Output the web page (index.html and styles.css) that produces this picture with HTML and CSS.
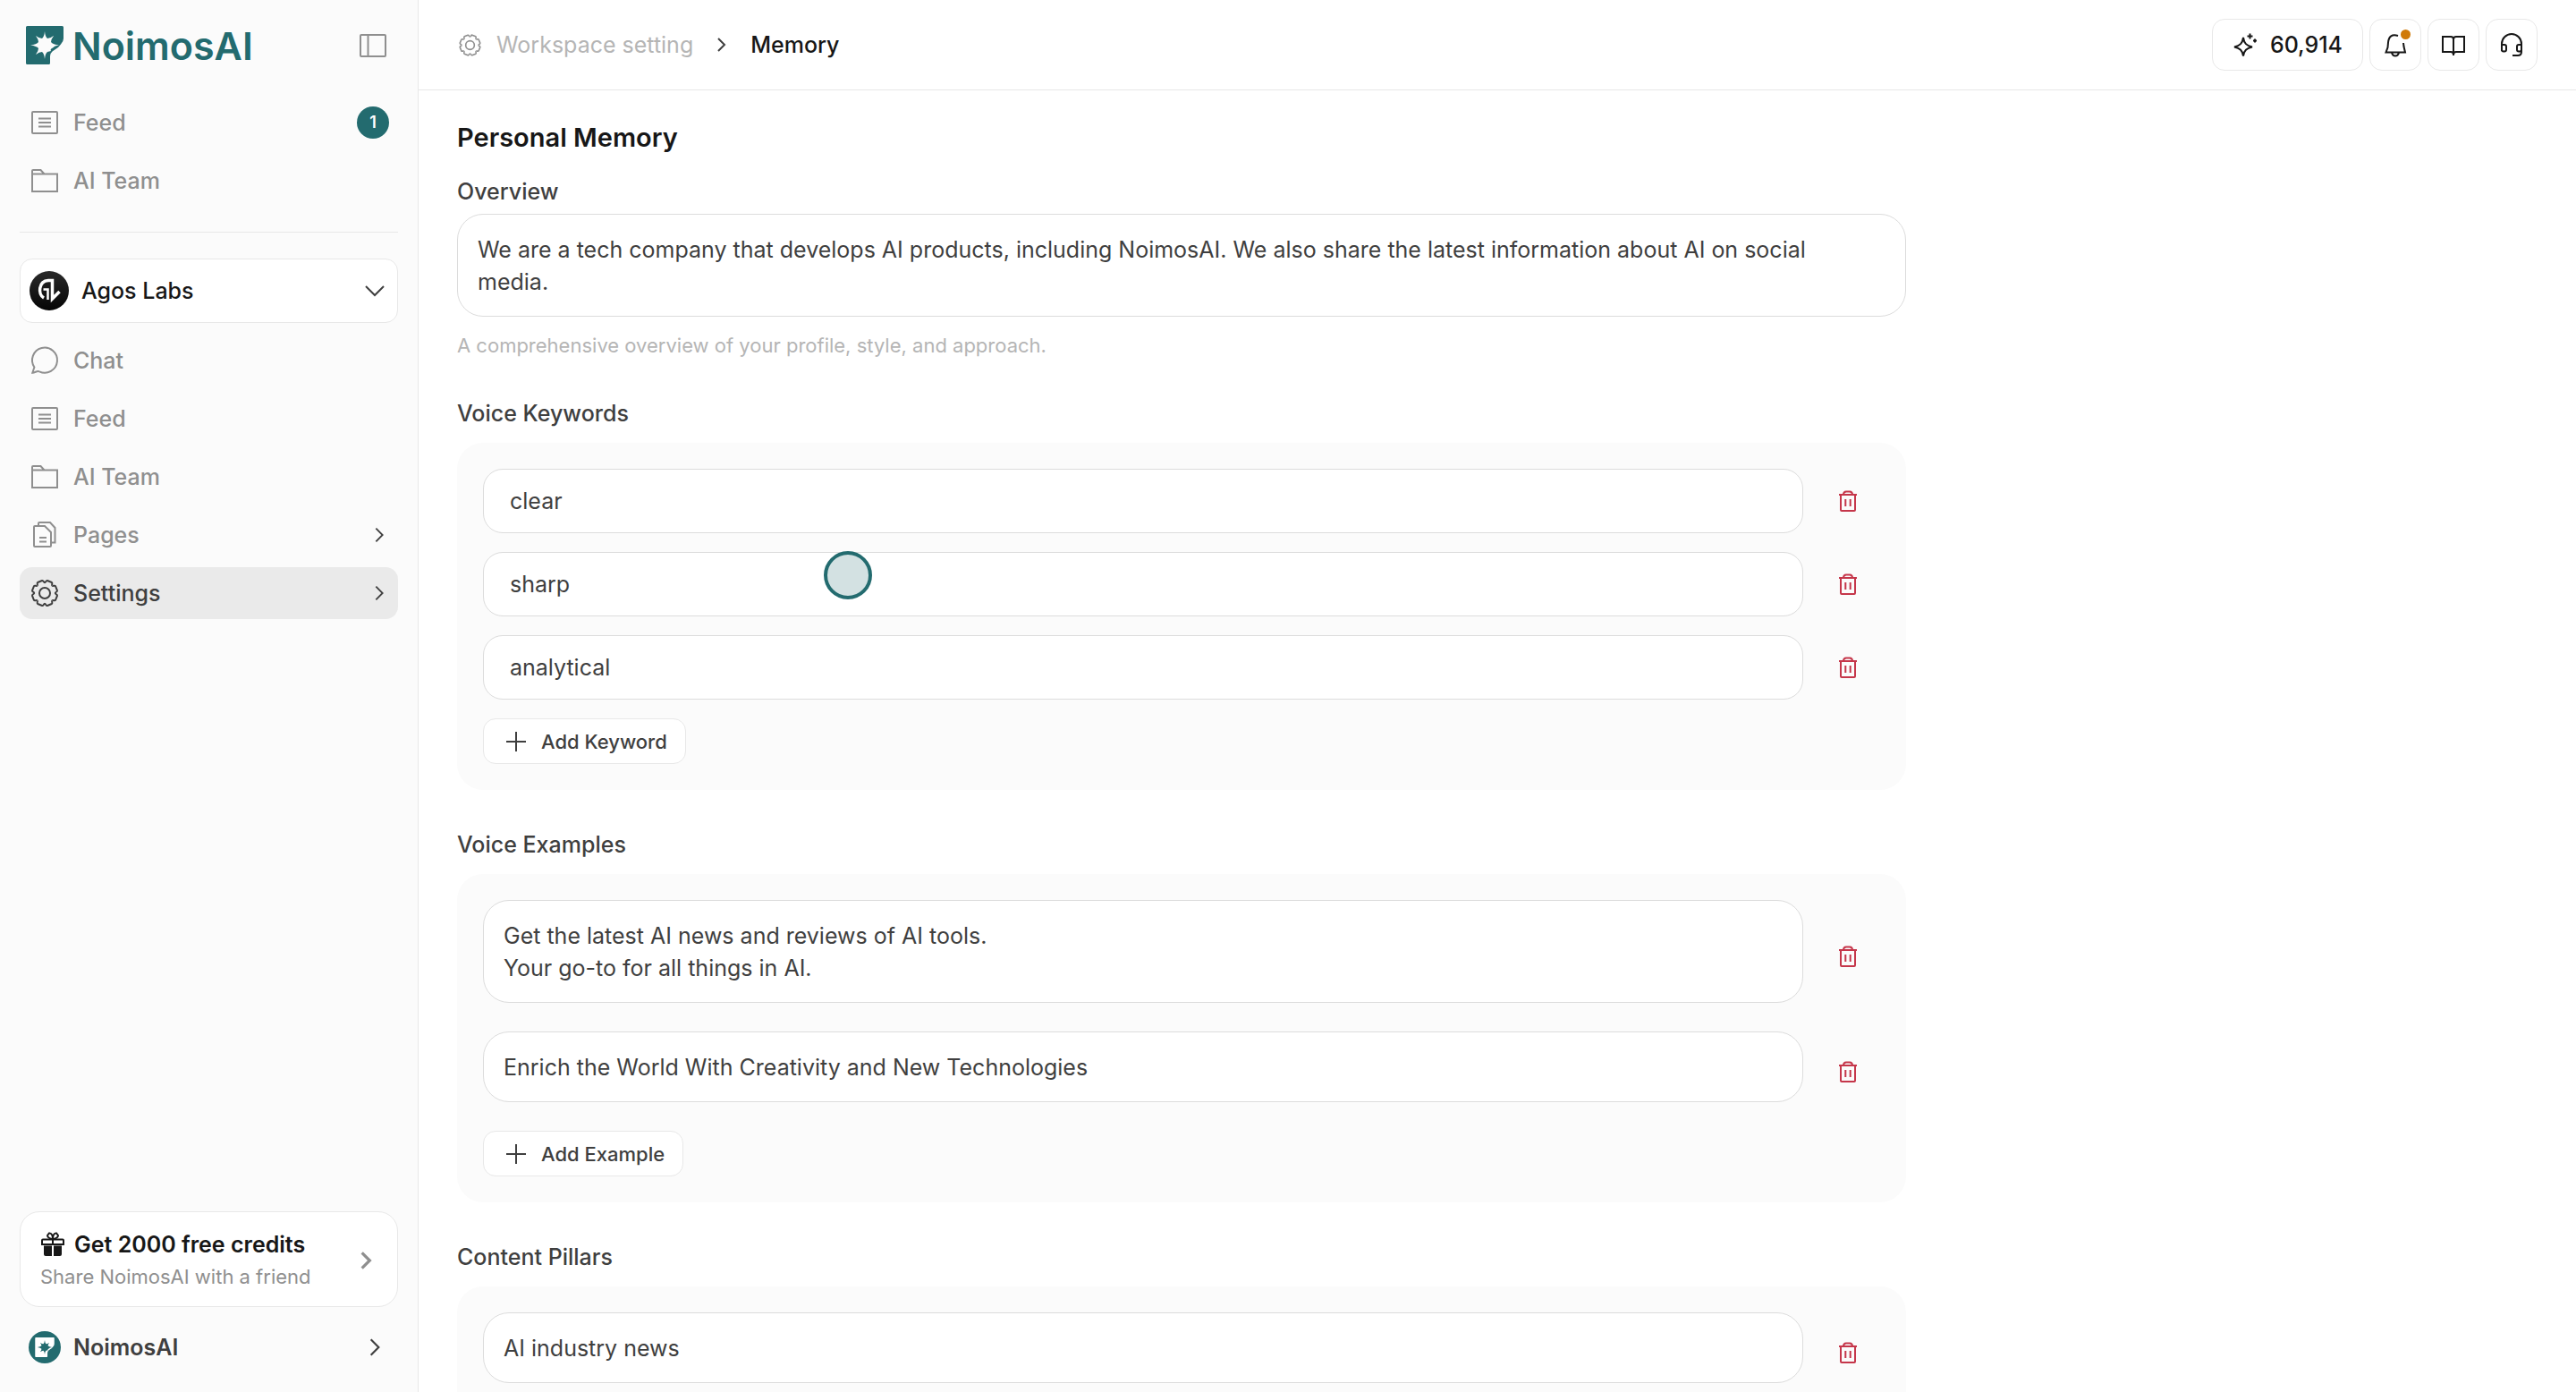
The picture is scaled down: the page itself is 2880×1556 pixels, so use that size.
FILE: index.html
```html
<!DOCTYPE html>
<html lang="en">
<head>
<meta charset="utf-8">
<title>Memory - NoimosAI</title>
<link rel="stylesheet" href="styles.css">
</head>
<body>
<svg class="sprite" aria-hidden="true">
  <symbol id="i-feed" viewBox="0 0 36 36"><rect x="4" y="6" width="28" height="24" rx="1"/><path d="M11 13.500h14M11 18h14M11 22.500h14"/></symbol>
  <symbol id="i-folder" viewBox="0 0 36 36"><path d="M4 10.500V30h28V10.500H4V7q0-1 1-1h8.500l4 4.500"/></symbol>
  <symbol id="i-chat" viewBox="0 0 36 36"><path d="M4.300 31.700 6.400 25.500A14 14 0 1 1 12 30.300C9.500 29 7.500 31.500 4.300 31.700Z"/></symbol>
  <symbol id="i-pages" viewBox="0 0 36 36"><path d="M6 9q0-1 1-1h11l7 7v15q0 1-1 1H7q-1 0-1-1ZM11 8V5q0-1 1-1h12l5.500 6v16.500H25.500M12 21h8M12 25.500h8"/></symbol>
  <symbol id="i-gear" viewBox="0 0 36 36">
    <defs><path id="tooth" d="M18 6.200C19.300 6.200 19.400 3.500 21 4L25.770 6C27.270 6.760 25.420 8.740 26.340 9.660"/></defs>
    <circle cx="18" cy="18" r="6"/>
    <use href="#tooth"/><use href="#tooth" transform="rotate(45 18 18)"/><use href="#tooth" transform="rotate(90 18 18)"/><use href="#tooth" transform="rotate(135 18 18)"/><use href="#tooth" transform="rotate(180 18 18)"/><use href="#tooth" transform="rotate(225 18 18)"/><use href="#tooth" transform="rotate(270 18 18)"/><use href="#tooth" transform="rotate(315 18 18)"/>
  </symbol>
  <symbol id="i-right" viewBox="0 0 24 24"><path d="m8 4 8 8-8 8"/></symbol>
  <symbol id="i-down" viewBox="0 0 24 24"><path d="m2 7 10 10L22 7"/></symbol>
  <symbol id="i-plus" viewBox="0 0 24 24"><path d="M12 1v22M1 12h22"/></symbol>
  <symbol id="i-trash" viewBox="0 0 28 28"><path d="M4 7h20M6 7v17q0 1 1 1h14q1 0 1-1V7M9 7q0-3.500 3-3.500h4q3 0 3 3.500M11.300 12v8M16.700 12v8"/></symbol>
  <symbol id="i-note" viewBox="0 0 42 43"><path fill-rule="evenodd" d="M1.500 0H40.500Q42 0 42 1.500V14Q42 17.500 39 20.500L36 24Q33 26 29.500 28.500Q27 30.500 27 34V41.500Q27 43 25.500 43H1.500Q0 43 0 41.500V1.500Q0 0 1.500 0ZM21 6Q20.500 12 18 14Q15 14 11 11Q14 15 14 18Q12 20.500 5 21.500Q12 22.500 14 25Q14 28 11 32Q15 29 18 29Q20.500 31 21 37Q21.500 31 24 29L28 28Q26.500 26 30 24.500Q32 22 37 21.500Q30 20.500 28 18Q28 15 31 11Q27 14 24 14Q21.500 12 21 6Z"/></symbol>
</svg>

<div class="app">
  <aside class="sidebar">
    <div class="brand">
      <a class="brand-link" href="#">
        <svg class="brand-mark"><use href="#i-note"/></svg>
        <span>NoimosAI</span>
      </a>
      <button class="plain toggle" aria-label="Toggle sidebar">
        <svg class="icon" viewBox="0 0 36 36"><rect x="4" y="6" width="28" height="24" rx="1"/><path d="M12.500 6v24"/></svg>
      </button>
    </div>
    <nav class="nav" aria-label="Personal">
      <a class="item" href="#"><svg class="icon"><use href="#i-feed"/></svg><span class="grow">Feed</span><span class="count">1</span></a>
      <a class="item" href="#"><svg class="icon"><use href="#i-folder"/></svg><span class="grow">AI Team</span></a>
    </nav>
    <hr class="rule">
    <button class="workspace">
      <svg class="avatar" viewBox="0 0 44 44"><defs><linearGradient id="ink" x1="0" y1="0" x2="0" y2="1"><stop offset="0" stop-color="#2a2a2a"/><stop offset="1" stop-color="#050505"/></linearGradient></defs><circle cx="22" cy="22" r="22" fill="url(#ink)"/><path d="M16 30C9 26 10 11 21 10.500h4.500V31L33.500 23" fill="none" stroke="#fff" stroke-width="3.500"/><path d="M20.500 32V20.500h-5" fill="none" stroke="#fff" stroke-width="2.500"/></svg>
      <span class="grow">Agos Labs</span>
      <svg class="chevron"><use href="#i-down"/></svg>
    </button>
    <nav class="nav" aria-label="Workspace">
      <a class="item" href="#"><svg class="icon"><use href="#i-chat"/></svg><span class="grow">Chat</span></a>
      <a class="item" href="#"><svg class="icon"><use href="#i-feed"/></svg><span class="grow">Feed</span></a>
      <a class="item" href="#"><svg class="icon"><use href="#i-folder"/></svg><span class="grow">AI Team</span></a>
      <a class="item" href="#"><svg class="icon"><use href="#i-pages"/></svg><span class="grow">Pages</span><svg class="chevron small"><use href="#i-right"/></svg></a>
      <a class="item active" href="#" aria-current="page"><svg class="icon"><use href="#i-gear"/></svg><span class="grow">Settings</span><svg class="chevron small"><use href="#i-right"/></svg></a>
    </nav>
    <div class="bottom">
      <a class="promo" href="#">
        <span class="grow">
          <span class="promo-title"><svg class="gift" viewBox="0 0 28 28"><path d="M3 8.500h22q1 0 1 1V14H2V9.500q0-1 1-1Z" fill="none" stroke="#171717" stroke-width="2"/><path d="M4 15.500h9V27H6q-2 0-2-2ZM15 15.500h9V25q0 2-2 2h-7ZM13 9h2v6h-2Z" fill="#171717"/><path d="M14 8C11 8 8 6 8 4t2-2.500C13 1 14 5 14 8Zm0 0c3 0 6-2 6-4t-2-2.500C15 1 14 5 14 8Z" fill="none" stroke="#171717" stroke-width="2"/></svg>Get 2000 free credits</span>
          <span class="promo-sub">Share NoimosAI with a friend</span>
        </span>
        <svg class="chevron bold"><use href="#i-right"/></svg>
      </a>
      <button class="account">
        <span class="account-mark"><svg><use href="#i-note"/></svg></span>
        <span class="grow">NoimosAI</span>
        <svg class="chevron"><use href="#i-right"/></svg>
      </button>
    </div>
  </aside>

  <div class="page">
    <header class="topbar">
      <nav class="crumbs" aria-label="Breadcrumb">
        <svg class="crumb-icon"><use href="#i-gear"/></svg>
        <a href="#">Workspace setting</a>
        <svg class="crumb-sep" viewBox="0 0 18 18"><path d="m5 2 7 7-7 7"/></svg>
        <span class="here" aria-current="page">Memory</span>
      </nav>
      <div class="tools">
        <button class="tool credits">
          <svg viewBox="0 0 28 28"><path d="M12 6c1 6.500 3.500 9 10 10.500C15.500 18 13 20.500 12 26.500 11 20.500 8.500 18 2 16.500 8.500 15 11 12.500 12 6ZM19.500 1.500v6M16.500 4.500h6M25 7.500v4M23 9.500h4"/></svg>
          60,914
        </button>
        <button class="tool" aria-label="Notifications">
          <svg viewBox="0 0 28 28"><path d="M17 4Q7 1 6 11.500L5.500 17l-2 5.500h21.500L23.500 16 23 12M10 23q1 3.500 4 3.500t4-3.500"/></svg>
          <span class="dot"></span>
        </button>
        <button class="tool" aria-label="Guide">
          <svg viewBox="0 0 28 28"><path d="M2 5h9q3 0 3 3 0-3 3-3h9v17h-9q-3 0-3 3 0-3-3-3H2ZM14 8v18"/></svg>
        </button>
        <button class="tool" aria-label="Support">
          <svg viewBox="0 0 28 28"><path d="M3 21v-8a11 11 0 0 1 22 0v9q0 4-4 4h-6M3 14h3q2 0 2 2v3.500q0 2-2 2H5q-2 0-2-2ZM25 14h-3q-2 0-2 2v3.500q0 2 2 2h1q2 0 2-2Z"/></svg>
        </button>
      </div>
    </header>

    <main class="content">
      <h1>Personal Memory</h1>
      <section class="overview">
        <label for="overview">Overview</label>
        <textarea id="overview" rows="2">We are a tech company that develops AI products, including NoimosAI. We also share the latest information about AI on social media.</textarea>
        <p class="help">A comprehensive overview of your profile, style, and approach.</p>
      </section>

      <section class="group">
        <h2>Voice Keywords</h2>
        <div class="panel">
          <div class="row"><input type="text" value="clear" aria-label="Keyword 1"><button class="plain remove" aria-label="Remove keyword 1"><svg><use href="#i-trash"/></svg></button></div>
          <div class="row"><input type="text" value="sharp" aria-label="Keyword 2"><button class="plain remove" aria-label="Remove keyword 2"><svg><use href="#i-trash"/></svg></button></div>
          <div class="row"><input type="text" value="analytical" aria-label="Keyword 3"><button class="plain remove" aria-label="Remove keyword 3"><svg><use href="#i-trash"/></svg></button></div>
          <button class="add"><svg><use href="#i-plus"/></svg>Add Keyword</button>
        </div>
      </section>

      <section class="group">
        <h2>Voice Examples</h2>
        <div class="panel">
          <div class="row"><div class="field"><textarea rows="2" aria-label="Example 1">Get the latest AI news and reviews of AI tools.
Your go-to for all things in AI.</textarea></div><button class="plain remove" aria-label="Remove example 1"><svg><use href="#i-trash"/></svg></button></div>
          <div class="row"><div class="field"><textarea rows="1" aria-label="Example 2">Enrich the World With Creativity and New Technologies</textarea></div><button class="plain remove" aria-label="Remove example 2"><svg><use href="#i-trash"/></svg></button></div>
          <button class="add"><svg><use href="#i-plus"/></svg>Add Example</button>
        </div>
      </section>

      <section class="group">
        <h2>Content Pillars</h2>
        <div class="panel">
          <div class="row"><div class="field"><textarea rows="1" aria-label="Pillar 1">AI industry news</textarea></div><button class="plain remove" aria-label="Remove pillar 1"><svg><use href="#i-trash"/></svg></button></div>
        </div>
      </section>
    </main>
  </div>
</div>
<div class="pointer" aria-hidden="true"></div>
</body>
</html>
```
FILE: styles.css
```css
:root {
  --teal: #236b6f;
  --ink: #171717;
  --text: #3f3f3f;
  --muted: #8f8f8f;
  --faint: #b5b5b5;
  --line: #e8e8e8;
  --field-line: #dcdcdc;
  --soft: #fbfbfb;
}

* { box-sizing: border-box; }

body {
  margin: 0;
  height: 100vh;
  overflow: hidden;
  background: #fff;
  color: var(--text);
  font: 400 25px/36px Inter, sans-serif;
}

a { color: inherit; text-decoration: none; }
button, input, textarea { font: inherit; color: inherit; }
button { cursor: pointer; }
h1, h2, p { margin: 0; }
svg { display: block; flex: none; fill: none; stroke: currentColor; stroke-width: 2; }
.sprite { position: absolute; width: 0; height: 0; }
.grow { flex: 1; text-align: left; }
.plain { border: 0; padding: 0; background: none; }

.app { display: flex; height: 100vh; }

/* Sidebar */
.sidebar {
  display: flex;
  flex-direction: column;
  flex: none;
  width: 468px;
  padding: 0 22px;
  border-right: 1px solid var(--line);
  background: var(--soft);
}
.brand {
  display: flex;
  align-items: center;
  justify-content: space-between;
  height: 101px;
  padding: 0 10px 0 7px;
}
.brand-link {
  display: flex;
  align-items: center;
  gap: 10px;
  color: var(--teal);
  font-size: 43px;
  font-weight: 600;
  line-height: 58px;
}
.brand-mark { width: 42px; height: 43px; fill: var(--teal); stroke: none; }
.icon { width: 36px; height: 36px; }
.toggle { color: var(--muted); }

.nav { display: flex; flex-direction: column; gap: 7px; }
.nav:first-of-type { margin-top: 7px; }
.item {
  display: flex;
  align-items: center;
  gap: 14px;
  height: 58px;
  padding: 0 10px;
  border-radius: 14px;
  color: var(--muted);
  font-weight: 500;
}
.item.active { background: #eaeaea; color: var(--text); }
.count {
  width: 36px;
  border-radius: 50%;
  background: var(--teal);
  color: #fff;
  font-size: 18px;
  font-weight: 600;
  text-align: center;
}
.chevron { width: 26px; height: 26px; color: var(--text); }
.workspace .chevron { width: 24px; }
.chevron.small { width: 22px; height: 22px; }
.chevron.bold { color: var(--muted); stroke-width: 3; }

.rule { width: 100%; margin: 28px 0 29px; border: 0; border-top: 1px solid var(--line); }
.workspace {
  display: flex;
  align-items: center;
  gap: 14px;
  height: 72px;
  margin-bottom: 13px;
  padding: 0 13px 0 10px;
  border: 1px solid var(--line);
  border-radius: 14px;
  background: #fff;
  color: var(--ink);
  font-weight: 500;
}
.avatar { width: 44px; height: 44px; stroke: none; }

.bottom { display: flex; flex-direction: column; gap: 14px; margin-top: auto; padding-bottom: 19px; }
.promo {
  display: flex;
  align-items: center;
  padding: 18px 22px 15px;
  border: 1px solid var(--line);
  border-radius: 22px;
  background: #fff;
}
.promo-title { display: flex; align-items: center; gap: 10px; color: var(--ink); font-weight: 600; }
.promo-sub { display: block; color: var(--muted); font-size: 22px; }
.gift { width: 28px; height: 28px; stroke: none; }
.account {
  display: flex;
  align-items: center;
  gap: 14px;
  height: 62px;
  padding: 0 13px 0 10px;
  border: 0;
  background: none;
  font-weight: 600;
}
.account-mark {
  display: flex;
  align-items: center;
  justify-content: center;
  width: 36px;
  height: 36px;
  border-radius: 50%;
  background: var(--teal);
}
.account-mark svg { width: 22px; height: 22px; fill: #fff; stroke: none; }

/* Top bar */
.page { display: flex; flex: 1; flex-direction: column; min-width: 0; }
.topbar {
  display: flex;
  flex: none;
  align-items: center;
  justify-content: space-between;
  height: 101px;
  padding: 0 43px;
  border-bottom: 1px solid var(--line);
}
.crumbs { display: flex; align-items: center; color: var(--faint); }
.crumb-icon { width: 29px; height: 29px; margin-right: 15px; color: var(--muted); }
.crumb-sep { width: 18px; height: 18px; margin: 0 23px; color: var(--text); }
.here { color: var(--ink); font-weight: 500; }
.tools { display: flex; gap: 7px; }
.tool {
  position: relative;
  display: flex;
  align-items: center;
  justify-content: center;
  width: 58px;
  height: 58px;
  padding: 0;
  border: 1px solid var(--line);
  border-radius: 14px;
  background: #fff;
  color: var(--ink);
  font-weight: 500;
}
.tool svg { width: 28px; height: 28px; }
.credits { gap: 14px; width: auto; padding: 0 22px; }
.dot {
  position: absolute;
  top: 11px;
  right: 11px;
  width: 11px;
  height: 11px;
  border-radius: 50%;
  background: #d07a08;
}

/* Memory form */
.content {
  display: flex;
  flex: 1;
  flex-direction: column;
  gap: 43px;
  min-height: 0;
  padding: 31px 43px;
  overflow: hidden;
}
.content > * { flex: none; width: 100%; max-width: 1620px; }
h1 { margin-bottom: -23px; color: var(--ink); font-size: 29px; font-weight: 600; line-height: 44px; }
h2, label { display: block; font-size: 25px; font-weight: 500; line-height: 36px; }
label { margin-bottom: 7px; }
h2 { margin-bottom: 15px; }
textarea {
  display: block;
  width: 100%;
  padding: 21px 29px 20px 22px;
  border: 1px solid var(--field-line);
  border-radius: 29px;
  background: #fff;
  resize: none;
  overflow: hidden;
}
.help { margin-top: 18px; color: var(--faint); font-size: 22px; line-height: 29px; }
.panel {
  display: flex;
  flex-direction: column;
  align-items: flex-start;
  gap: 21px;
  padding: 29px;
  border-radius: 29px;
  background: var(--soft);
}
.row { display: flex; align-items: center; gap: 14px; width: 100%; }
.field { flex: 1; padding-bottom: 11px; }
input {
  flex: 1;
  min-width: 0;
  height: 72px;
  padding: 0 29px;
  border: 1px solid var(--field-line);
  border-radius: 22px;
  background: #fff;
}
.remove { display: flex; justify-content: center; width: 72px; color: #c5364a; }
.remove svg { width: 28px; height: 28px; }
.add {
  display: flex;
  align-items: center;
  gap: 16px;
  height: 51px;
  padding: 0 20px 0 24px;
  border: 1px solid var(--line);
  border-radius: 14px;
  background: #fff;
  font-size: 22px;
  font-weight: 500;
}
.add svg { width: 24px; height: 24px; }

.pointer {
  position: absolute;
  left: 921px;
  top: 616px;
  width: 54px;
  height: 54px;
  border: 4px solid var(--teal);
  border-radius: 50%;
  background: #d3e1e2;
}
```
